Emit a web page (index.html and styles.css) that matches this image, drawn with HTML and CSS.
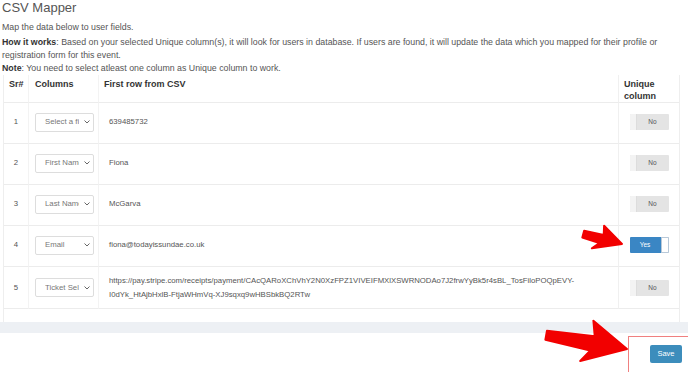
FILE: index.html
```html
<!DOCTYPE html>
<html lang="en">
<head>
<meta charset="UTF-8">
<meta name="viewport" content="width=device-width, initial-scale=1.0">
<title>CSV Mapper</title>
<link rel="stylesheet" href="styles.css">
</head>
<body>

<div class="intro">
<h3>CSV Mapper</h3>
<p class="lead">Map the data below to user fields.</p>
<p class="how"><b>How it works</b>: Based on your selected Unique column(s), it will look for users in database. If users are found, it will update the data which you mapped for their profile or registration form for this event.</p>
<p class="note"><b>Note</b>: You need to select atleast one column as Unique column to work.</p>
</div>

<div class="panel">
<table class="mapper">
<thead>
<tr>
<th class="col-sr">Sr#</th>
<th class="col-field">Columns</th>
<th class="col-csv">First row from CSV</th>
<th class="col-unique">Unique<br>column</th>
</tr>
</thead>
<tbody>
<tr>
<td class="col-sr">1</td>
<td class="col-field"><div class="select"><span>Select a field</span><svg width="6" height="4" viewBox="0 0 6 4"><path d="M0.5 0.5 L3 3 L5.5 0.5" fill="none" stroke="#666" stroke-width="1"/></svg></div></td>
<td class="col-csv">639485732</td>
<td class="col-unique"><div class="toggle"><span class="handle"></span><span class="label">No</span></div></td>
</tr>
<tr>
<td class="col-sr">2</td>
<td class="col-field"><div class="select"><span>First Name</span><svg width="6" height="4" viewBox="0 0 6 4"><path d="M0.5 0.5 L3 3 L5.5 0.5" fill="none" stroke="#666" stroke-width="1"/></svg></div></td>
<td class="col-csv">Fiona</td>
<td class="col-unique"><div class="toggle"><span class="handle"></span><span class="label">No</span></div></td>
</tr>
<tr>
<td class="col-sr">3</td>
<td class="col-field"><div class="select"><span>Last Name</span><svg width="6" height="4" viewBox="0 0 6 4"><path d="M0.5 0.5 L3 3 L5.5 0.5" fill="none" stroke="#666" stroke-width="1"/></svg></div></td>
<td class="col-csv">McGarva</td>
<td class="col-unique"><div class="toggle"><span class="handle"></span><span class="label">No</span></div></td>
</tr>
<tr>
<td class="col-sr">4</td>
<td class="col-field"><div class="select"><span>Email</span><svg width="6" height="4" viewBox="0 0 6 4"><path d="M0.5 0.5 L3 3 L5.5 0.5" fill="none" stroke="#666" stroke-width="1"/></svg></div></td>
<td class="col-csv">fiona@todayissundae.co.uk</td>
<td class="col-unique"><div class="toggle on"><span class="label">Yes</span><span class="handle"></span></div></td>
</tr>
<tr class="tall">
<td class="col-sr">5</td>
<td class="col-field"><div class="select"><span>Ticket Sellers</span><svg width="6" height="4" viewBox="0 0 6 4"><path d="M0.5 0.5 L3 3 L5.5 0.5" fill="none" stroke="#666" stroke-width="1"/></svg></div></td>
<td class="col-csv">https://pay.stripe.com/receipts/payment/CAcQARoXChVhY2N0XzFPZ1VIVEIFMXlXSWRNODAo7J2frwYyBk5r4sBL_TosFiloPOQpEVY-I0dYk_HtAjbHxlB-FtjaWHmVq-XJ9sqxq9wHBSbkBQ2RTw</td>
<td class="col-unique"><div class="toggle"><span class="handle"></span><span class="label">No</span></div></td>
</tr>
</tbody>
</table>
</div>

<div class="band"></div>

<div class="footer">
<button class="save">Save</button>
</div>

<!-- annotation marks from the screenshot -->
<div class="callout"></div>
<svg class="arrows" width="688" height="372" viewBox="0 0 688 372">
<polygon transform="translate(622 244) rotate(15)" points="0,0 -22,-13 -20,-4 -40,-3 -40,4 -22,5 -28,12" fill="#f20000" stroke="#f20000" stroke-width="2" stroke-linejoin="round"/>
<polygon transform="translate(627 349) rotate(10)" points="0,0 -38,-22 -34,-7 -82,-4 -82,5 -36,8 -44,20" fill="#f20000" stroke="#f20000" stroke-width="2" stroke-linejoin="round"/>
</svg>

</body>
</html>
```

FILE: styles.css
```css
html, body {
    overflow: hidden;
}

body {
    font-family: "Liberation Sans", Arial, sans-serif;
    background-color: #fff;
    color: #555;
    margin: 0;
    padding: 0;
    position: relative;
    width: 688px;
    height: 372px;
}

.intro {
    padding-left: 2px;
    max-width: 668px;
}

.intro h3 {
    margin: 0;
    font-size: 13px;
    font-weight: normal;
    line-height: 16px;
    color: #555;
}

.intro p {
    margin: 0;
    font-size: 8.8px;
    line-height: 12.5px;
}

.intro .lead {
    margin-top: 5px;
}

.intro .how {
    margin-top: 2.5px;
}

.intro .note {
    margin-top: 1px;
}

.intro b {
    color: #333;
}

.panel {
    margin: 0 8px 0 3px;
    border-left: 1px solid #eee;
    border-right: 1px solid #eee;
    padding-bottom: 13px;
}

.mapper {
    width: 100%;
    border-collapse: separate;
    border-spacing: 0;
    table-layout: fixed;
}

.mapper th {
    font-size: 9px;
    line-height: 12px;
    color: #333;
    text-align: left;
    vertical-align: top;
    padding: 3px 5px 0 5px;
    border-bottom: 1px solid #ececec;
}

.mapper td {
    font-size: 7.75px;
    line-height: 14px;
    color: #555;
    height: 19px;
    padding: 10px 5px 11px 5px;
    border-bottom: 1px solid #ececec;
    vertical-align: middle;
}

.mapper .tall td {
    padding: 7px 5px 6px 5px;
}

.mapper .col-sr {
    width: 14px;
    text-align: center;
    border-right: 1px solid #f3f3f3;
}

.mapper .col-field {
    width: 58px;
    border-right: 1px solid #f3f3f3;
}

.mapper th.col-field,
.mapper td.col-field {
    padding-left: 6px;
}

.mapper .col-csv {
    border-right: 1px solid #f0f0f0;
}

.mapper td.col-csv {
    padding-left: 10px;
    overflow-wrap: anywhere;
}

.mapper .col-unique {
    width: 50px;
}

.mapper td.col-unique {
    text-align: center;
}

.select {
    display: flex;
    align-items: center;
    width: 59px;
    height: 19px;
    box-sizing: border-box;
    border: 1px solid #ddd;
    border-radius: 2px;
    padding: 0 3px 0 9px;
    background: #fff;
}

.select span {
    flex: 1;
    overflow: hidden;
    white-space: nowrap;
    font-size: 7.8px;
    color: #777;
}

.select svg {
    margin-left: 5px;
}

.toggle {
    display: inline-flex;
    width: 39px;
    height: 16px;
    background-color: #e4e4e4;
    border-radius: 1px;
    overflow: hidden;
    vertical-align: middle;
}

.toggle .handle {
    width: 6px;
    background-color: #f3f3f3;
    border-right: 1px solid #ddd;
}

.toggle .label {
    flex: 1;
    font-size: 6.5px;
    line-height: 16px;
    text-align: center;
    color: #555;
}

.toggle.on {
    background-color: #3a86c4;
}

.toggle.on .label {
    color: #fff;
}

.toggle.on .handle {
    width: 6px;
    background-color: #fff;
    border-right: 1px solid #b8c8d8;
    border-left: 1px solid #b8c8d8;
    border-top: 1px solid #b8c8d8;
    border-bottom: 1px solid #b8c8d8;
}

.band {
    height: 11px;
    background-color: #edf0f4;
}

.footer {
    display: flex;
    justify-content: flex-end;
    padding: 12px 6px 0 0;
}

.save {
    width: 32px;
    height: 18px;
    padding: 0;
    border: none;
    border-radius: 2px;
    background-color: #3c8dbc;
    color: #fff;
    font-family: "Liberation Sans", Arial, sans-serif;
    font-size: 7.5px;
}

.callout {
    position: absolute;
    left: 628px;
    top: 336px;
    right: 0;
    bottom: 0;
    border-left: 1px solid #f08080;
    border-top: 1px solid #f08080;
}

.arrows {
    position: absolute;
    left: 0;
    top: 0;
    pointer-events: none;
}
```
